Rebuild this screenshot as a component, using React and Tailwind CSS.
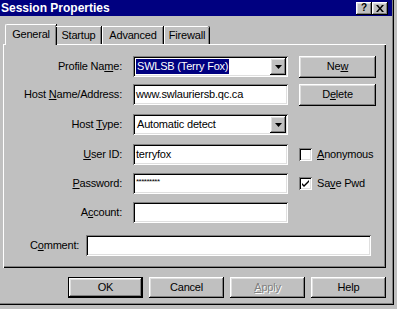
import React from "react"

const raised =
  "shadow-[inset_-1px_-1px_#000,inset_1px_1px_#fff,inset_-2px_-2px_#808080,inset_2px_2px_#dfdfdf]"
const sunken =
  "shadow-[inset_1px_1px_#808080,inset_-1px_-1px_#fff,inset_2px_2px_#000,inset_-2px_-2px_#dfdfdf]"

const U = ({ children }) => <span className="underline underline-offset-[1px]">{children}</span>

const Field = ({ children, className = "" }) => (
  <div className={`h-[21px] bg-white flex items-center pl-[3px] ${sunken} ${className}`}>{children}</div>
)

const Arrow = () => (
  <div className={`w-[16px] h-[17px] bg-[#c0c0c0] flex items-center justify-center ${raised}`}>
    <svg width="7" height="4" viewBox="0 0 7 4">
      <path d="M0 0h7L3.5 4z" fill="#000" />
    </svg>
  </div>
)

const Select = ({ children }) => (
  <Field className="pr-[2px] justify-between">
    {children}
    <Arrow />
  </Field>
)

const Button = ({ children, className = "" }) => (
  <div className={`flex items-center justify-center bg-[#c0c0c0] ${raised} ${className}`}>{children}</div>
)

const Check = ({ checked, children }) => (
  <div className="flex items-center">
    <div className={`w-[13px] h-[13px] bg-white flex items-center justify-center ${sunken}`}>
      {checked && (
        <svg width="9" height="9" viewBox="0 0 9 9">
          <path d="M1 4l2 2 5-5v2L3 8 1 6z" fill="#000" />
        </svg>
      )}
    </div>
    <span className="ml-[5px]">{children}</span>
  </div>
)

const Row = ({ label, children, right, className = "" }) => (
  <div className={`flex items-center h-[21px] ${className}`}>
    <div className="w-[119px] text-right">{label}</div>
    <div className="ml-[11px] w-[155px]">{children}</div>
    <div className="ml-[11px]">{right}</div>
  </div>
)

export default function App() {
  return (
    <div className="w-[397px] h-[309px] bg-[#c0c0c0] overflow-hidden font-['Liberation_Sans',Arial,sans-serif] text-[11px] text-black tracking-[-0.2px]">
      <div className="w-[394px] h-[305px] flex flex-col shadow-[inset_-1px_-1px_#000,inset_-2px_-2px_#808080]">
        {/* title bar */}
        <div className="w-[392px] h-[16px] bg-[#000080] flex items-center justify-between pl-[1px] pr-[4px]">
          <span className="text-white font-bold text-[12px] tracking-normal">Session Properties</span>
          <div className="flex">
            <div className={`w-[16px] h-[13px] flex items-center justify-center font-bold text-[10px] leading-none bg-[#c0c0c0] ${raised}`}>?</div>
            <div className={`w-[16px] h-[13px] flex items-center justify-center bg-[#c0c0c0] ${raised}`}>
              <svg width="8" height="7" viewBox="0 0 8 7">
                <path d="M0 0h2l2 2.5L6 0h2L5 3.5 8 7H6L4 4.5 2 7H0l3-3.5z" fill="#000" />
              </svg>
            </div>
          </div>
        </div>

        <div className="pl-[3px] pt-[8px]">
          {/* tabs */}
          <div className="flex items-end h-[20px] ml-[2px] relative z-10">
            <div className="h-[21px] w-[51px] mb-[-1px] bg-[#c0c0c0] border-t border-l border-white rounded-tl-[2px] shadow-[inset_-1px_0_#808080,1px_0_#000] flex items-center justify-center pb-[2px]">
              General
            </div>
            <div className="h-[18px] w-[45px] border-t border-white shadow-[inset_-1px_0_#808080,1px_0_#000] flex items-center justify-center">
              Startup
            </div>
            <div className="h-[18px] w-[61px] ml-[1px] border-t border-l border-white shadow-[inset_-1px_0_#808080,1px_0_#000] flex items-center justify-center">
              Advanced
            </div>
            <div className="h-[18px] w-[45px] ml-[1px] border-t border-l border-white rounded-tr-[2px] shadow-[inset_-1px_0_#808080,1px_0_#000] flex items-center justify-center">
              Firewall
            </div>
          </div>

          {/* panel */}
          <div className="w-[383px] h-[224px] pt-[12px] flex flex-col shadow-[inset_1px_1px_#fff,inset_-1px_-1px_#000,inset_-2px_-2px_#808080]">
            <Row
              label={<>Profile Na<U>m</U>e:</>}
              right={<Button className="w-[77px] h-[22px]">Ne<U>w</U></Button>}
            >
              <Select>
                <span className="bg-[#000080] text-white px-[1px] leading-[15px]">SWLSB (Terry Fox)</span>
              </Select>
            </Row>
            <Row
              className="mt-[7px]"
              label={<>Host <U>N</U>ame/Address:</>}
              right={<Button className="w-[77px] h-[22px]">D<U>e</U>lete</Button>}
            >
              <Field>www.swlauriersb.qc.ca</Field>
            </Row>
            <Row className="mt-[9px]" label={<>Host <U>T</U>ype:</>}>
              <Select>
                <span className="pl-[1px]">Automatic detect</span>
              </Select>
            </Row>
            <Row
              className="mt-[9px]"
              label={<><U>U</U>ser ID:</>}
              right={<Check><U>A</U>nonymous</Check>}
            >
              <Field>terryfox</Field>
            </Row>
            <Row
              className="mt-[8px]"
              label={<><U>P</U>assword:</>}
              right={<Check checked>Sa<U>v</U>e Pwd</Check>}
            >
              <Field>
                <span className="text-[8px] tracking-[-0.5px] mt-[-4px]">*********</span>
              </Field>
            </Row>
            <Row className="mt-[8px]" label={<>A<U>c</U>count:</>}>
              <Field />
            </Row>
            <div className="flex items-center h-[21px] mt-[12px]">
              <div className="w-[83px] pl-[27px]">C<U>o</U>mment:</div>
              <Field className="w-[285px]" />
            </div>
          </div>

          {/* buttons */}
          <div className="w-[383px] flex justify-end gap-[6px] mt-[9px]">
            <div className="w-[75px] h-[21px] border border-black">
              <Button className="w-full h-full">OK</Button>
            </div>
            <Button className="w-[75px] h-[21px]">Cancel</Button>
            <Button className="w-[75px] h-[21px] text-[#808080] [text-shadow:1px_1px_#fff]">
              <U>A</U>pply
            </Button>
            <Button className="w-[75px] h-[21px]">Help</Button>
          </div>
        </div>
      </div>
    </div>
  )
}
